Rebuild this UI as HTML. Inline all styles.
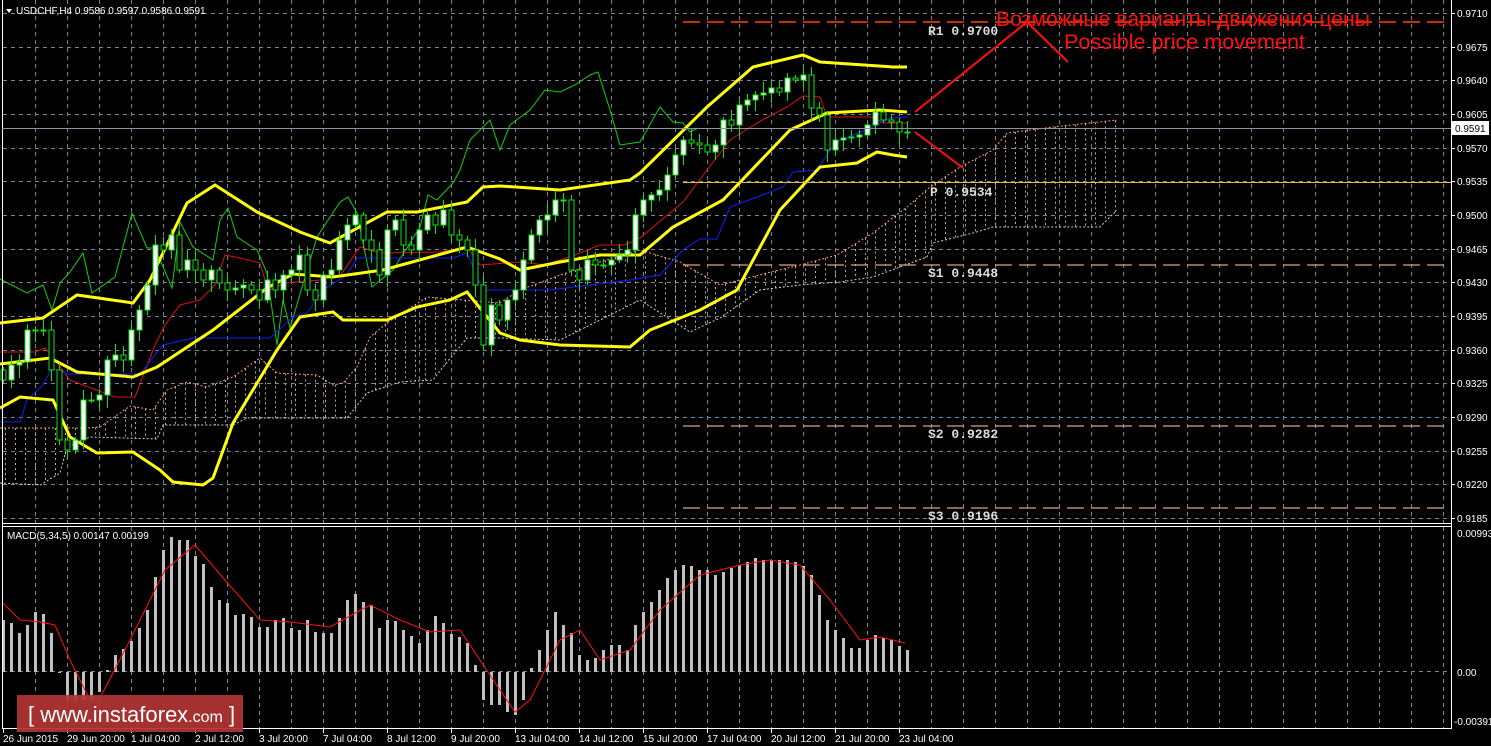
<!DOCTYPE html>
<html><head><meta charset="utf-8"><style>
html,body{margin:0;padding:0;background:#000;width:1491px;height:746px;overflow:hidden}
svg{display:block}
.ax{font-family:"Liberation Sans",sans-serif;font-size:10px;fill:#fff}
.pv{font-family:"Liberation Mono",monospace;font-size:13px;font-weight:bold;fill:#ddd}
</style></head><body>
<svg id="s" width="1491" height="746" xmlns="http://www.w3.org/2000/svg">
<rect width="1491" height="746" fill="#000"/>
<g id="grid" stroke="#7a8490" stroke-dasharray="4,4" stroke-width="1"></g>
<g id="cloud"></g>
<g id="lines" fill="none"></g>
<g id="candles"></g>
<g id="macd"></g>
<g stroke="#fff" stroke-width="1" fill="none">
<line x1="2.5" y1="0" x2="2.5" y2="728"/>
<line x1="1451.5" y1="0" x2="1451.5" y2="728"/>
<line x1="2" y1="523.5" x2="1452" y2="523.5"/>
<line x1="2" y1="526.5" x2="1452" y2="526.5"/>
<line x1="2" y1="728.5" x2="1452" y2="728.5"/>
</g>
<g id="axis"></g>
<line x1="2" y1="128.5" x2="1451" y2="128.5" stroke="#8a96a3"/>
<rect x="1452" y="121" width="37" height="14" fill="#fff"/>
<text x="1455" y="132" class="ax" style="fill:#000">0.9591</text>
<line x1="683" y1="22" x2="1447" y2="22" stroke="#ff4010" stroke-width="1.5" stroke-dasharray="17,7"/>
<line x1="683" y1="182.5" x2="1451" y2="182.5" stroke="#e8c040"/>
<line x1="683" y1="265" x2="1447" y2="265" stroke="#e0a080" stroke-width="1.2" stroke-dasharray="17,7"/>
<line x1="683" y1="426" x2="1447" y2="426" stroke="#e0a080" stroke-width="1.2" stroke-dasharray="17,7"/>
<line x1="683" y1="508" x2="1447" y2="508" stroke="#e0a080" stroke-width="1.2" stroke-dasharray="17,7"/>
<text x="928" y="35" class="pv">R1  0.9700</text>
<text x="930" y="196" class="pv">P  0.9534</text>
<text x="928" y="277" class="pv">S1  0.9448</text>
<text x="928" y="438" class="pv">S2  0.9282</text>
<text x="928" y="520" class="pv">S3  0.9196</text>
<polyline points="915,112 1027,22 1068,62" fill="none" stroke="#ff1010" stroke-width="2"/>
<line x1="915" y1="132" x2="963" y2="168" stroke="#ff1010" stroke-width="2"/>
<text x="996" y="26" font-family="Liberation Sans, sans-serif" font-size="21" fill="#ff1010" textLength="374" lengthAdjust="spacingAndGlyphs">Возможные варианты движения цены</text>
<text x="1064" y="49" font-family="Liberation Sans, sans-serif" font-size="21" fill="#ff1010" textLength="241" lengthAdjust="spacingAndGlyphs">Possible price movement</text>
<polygon points="6,9 12,9 9,13" fill="#fff"/>
<text x="16" y="14" class="ax">USDCHF,H4  0.9586 0.9597 0.9586 0.9591</text>
<text x="7" y="539" class="ax">MACD(5,34,5) 0.00147 0.00199</text>
<rect x="17" y="695" width="226" height="37" fill="#b03434" opacity="0.93"/>
<text x="28" y="722" font-family="Liberation Sans, sans-serif" font-size="22" fill="#fff">[ <tspan>www.instaforex</tspan><tspan font-size="16">.com</tspan> ]</text>
</svg>
<script>
(function(){
var NS="http://www.w3.org/2000/svg";
function el(p,t,a){var e=document.createElementNS(NS,t);for(var k in a)e.setAttribute(k,a[k]);p.appendChild(e);return e;}
var g=document.getElementById('grid');
for(var x=35;x<1450;x+=32){el(g,'line',{x1:x+.5,y1:0,x2:x+.5,y2:523});el(g,'line',{x1:x+.5,y1:527,x2:x+.5,y2:728});}
var ax=document.getElementById('axis');
for(var i=0;i<16;i++){var y=Math.round(13+i*33.67);el(g,'line',{x1:3,y1:y+.5,x2:1451,y2:y+.5});
 el(ax,'line',{x1:1451,y1:y+.5,x2:1455,y2:y+.5,stroke:'#fff'});
 var t=el(ax,'text',{x:1457,y:y+4,'class':'ax'});t.textContent=(0.9710-i*0.0035).toFixed(4);}
el(g,'line',{x1:3,y1:671.5,x2:1451,y2:671.5});
[['0.00993',533,1457],['0.00',672,1457],['-0.00391',721,1454]].forEach(function(a){var t=el(ax,'text',{x:a[2],y:a[1]+4,'class':'ax'});t.textContent=a[0];});
var dates=["26 Jun 2015","29 Jun 20:00","1 Jul 04:00","2 Jul 12:00","3 Jul 20:00","7 Jul 04:00","8 Jul 12:00","9 Jul 20:00","13 Jul 04:00","14 Jul 12:00","15 Jul 20:00","17 Jul 04:00","20 Jul 12:00","21 Jul 20:00","23 Jul 04:00"];
dates.forEach(function(d,i){var x=3+i*64;el(ax,'line',{x1:x+.5,y1:728,x2:x+.5,y2:733,stroke:'#fff'});var t=el(ax,'text',{x:x,y:742,'class':'ax'});t.textContent=d;});
var topA=[[0,428],[87,428],[100,427],[130,406],[153,410],[167,390],[187,382],[207,387],[233,377],[260,358],[277,373],[317,375],[333,385],[343,383],[357,367],[370,337],[387,323],[427,297],[463,300],[500,303],[520,290],[560,275],[600,262],[640,250],[680,262],[720,285],[767,273],[800,265],[837,255],[873,233],[907,207],[930,187],[960,167],[993,150],[1007,133],[1053,127],[1117,120]];
var botA=[[0,483],[40,485],[60,473],[67,447],[90,437],[157,439],[163,425],[233,425],[247,418],[347,418],[367,393],[400,382],[433,380],[443,367],[467,338],[500,338],[560,340],[640,300],[690,332],[720,318],[760,290],[800,285],[840,282],[873,277],[927,257],[933,243],[973,233],[993,227],[1100,227],[1117,210]];
function interp(arr,x){for(var i=1;i<arr.length;i++){if(x<=arr[i][0]){var a=arr[i-1],b=arr[i];return a[1]+(b[1]-a[1])*(x-a[0])/(b[0]-a[0]);}}return arr[arr.length-1][1];}
var cl=document.getElementById('cloud');
for(var x=5;x<=1117;x+=10){var a=interp(topA,x),b=interp(botA,x);el(cl,'line',{x1:x+.5,y1:Math.min(a,b),x2:x+.5,y2:Math.max(a,b),stroke:'#c9a890','stroke-dasharray':'2,3'});}
function pl(p,pts,c,w,d){var a={points:pts.map(function(q){return q.join(',')}).join(' '),stroke:c,'stroke-width':w,fill:'none'};if(d)a['stroke-dasharray']=d;el(p,'polyline',a);}
pl(cl,topA,'#f0a070',1,'2,2');pl(cl,botA,'#d0d0d0',1,'2,2');
var L=document.getElementById('lines');
pl(L,[[0,279],[27,293],[43,285],[52,310],[60,283],[70,272],[83,253],[92,293],[115,277],[132,213],[147,248],[155,248],[172,288],[180,222],[193,247],[213,260],[220,220],[228,208],[237,237],[257,250],[267,273],[277,345],[283,300],[290,328],[317,237],[340,202],[348,197],[357,213],[372,287],[393,270],[420,227],[428,195],[437,200],[453,183],[460,170],[470,140],[490,120],[500,150],[510,125],[530,110],[545,90],[560,92],[575,85],[590,75],[598,72],[610,110],[620,145],[640,142],[660,107],[673,122],[683,123],[690,132],[698,128]],'#10d010',1);
pl(L,[[0,352],[35,352],[45,348],[55,360],[70,380],[115,397],[135,397],[155,345],[165,325],[180,305],[200,300],[215,285],[225,255],[240,258],[260,263],[265,280],[270,290],[285,283],[320,280],[340,276],[360,247],[380,253],[440,252],[467,247],[480,265],[520,262],[545,265],[575,255],[600,245],[625,245],[640,238],[683,202],[707,170],[730,140],[757,123],[787,107],[803,96],[820,97],[827,117],[873,117],[883,123],[907,123]],'#e01010',1);
pl(L,[[0,422],[20,422],[27,400],[43,385],[52,368],[67,374],[140,374],[163,345],[193,338],[270,338],[293,317],[307,313],[323,290],[347,275],[357,258],[453,258],[467,253],[483,290],[550,290],[630,280],[660,275],[683,250],[700,239],[717,239],[730,207],[757,197],[783,187],[793,172],[817,170],[830,150],[840,140],[873,127],[890,118],[907,117]],'#1020ff',1);
pl(L,[[0,323],[43,318],[77,295],[133,303],[150,280],[187,203],[215,185],[257,212],[300,232],[330,243],[387,212],[417,212],[467,202],[483,187],[500,186],[560,190],[630,180],[640,173],[707,107],[753,67],[803,55],[820,62],[893,67],[907,67]],'#ffff10',3);
pl(L,[[0,364],[50,358],[77,372],[133,377],[157,367],[213,330],[267,288],[293,274],[333,277],[383,270],[467,247],[500,259],[520,270],[560,262],[600,255],[640,255],[673,227],[723,200],[790,130],[827,113],[880,110],[907,112]],'#ffff10',3);
pl(L,[[0,408],[20,397],[53,400],[70,437],[97,453],[133,452],[160,470],[173,482],[203,485],[213,478],[233,423],[277,350],[300,317],[333,312],[343,320],[387,320],[417,307],[450,300],[467,292],[500,333],[520,340],[560,345],[630,347],[650,330],[700,310],[737,290],[780,210],[820,167],[857,163],[877,152],[893,155],[907,157]],'#ffff10',3);
var C=[380,365,362,330,330,330,370,440,450,440,400,400,395,360,355,360,330,310,285,245,250,235,270,260,270,280,270,283,290,288,285,290,300,280,290,275,270,255,290,300,275,270,240,225,215,240,250,275,230,220,245,250,230,215,225,210,235,240,250,285,345,305,320,300,290,260,235,220,215,200,200,270,280,260,265,265,260,255,250,215,200,195,190,175,155,140,143,145,152,145,120,125,105,100,95,93,88,92,78,80,75,108,115,150,140,138,137,135,125,112,120,122,132,132];
var cg=document.getElementById('candles');var prev=370;
for(var i=0;i<C.length;i++){var x=3+i*8,o=prev,c=C[i];var h=Math.min(o,c)-3-((i*7)%9),l=Math.max(o,c)+3+((i*5)%11);
 el(cg,'line',{x1:x+.5,y1:h,x2:x+.5,y2:l,stroke:'#10e010'});
 var t=Math.min(o,c),bh=Math.max(1,Math.abs(o-c));
 el(cg,'rect',{x:x-2,y:t,width:5,height:bh,fill:c<=o?'#fff':'#000',stroke:'#10e010','stroke-width':1});prev=c;}
var M=[620,623,633,625,612,614,633,672,700,700,700,700,692,670,655,649,641,628,610,577,550,537,540,540,556,564,587,600,603,615,614,617,627,627,620,618,628,630,620,632,633,633,618,600,594,602,605,628,620,621,630,636,643,630,616,623,634,637,643,665,700,705,705,712,715,700,668,650,630,612,625,633,655,660,658,650,645,645,650,625,612,602,590,578,570,565,566,570,570,575,572,568,565,562,558,560,560,560,560,562,566,575,595,620,630,638,648,648,640,635,638,640,646,650];
var mg=document.getElementById('macd');
for(var i=0;i<M.length;i++){var x=3+i*8,y=M[i];el(mg,'rect',{x:x-1,y:Math.min(y,672),width:3,height:Math.max(1,Math.abs(y-672)),fill:'#c0c0c0'});}
pl(mg,[[3,603],[20,620],[40,622],[55,625],[70,660],[90,700],[100,698],[130,640],[165,570],[195,545],[225,580],[260,620],[290,622],[330,627],[370,605],[400,620],[430,632],[460,630],[500,690],[515,712],[530,700],[560,640],[580,630],[600,660],[630,650],[660,610],[700,575],[740,565],[770,560],[800,565],[830,600],[860,640],[880,637],[905,643]],'#ff1010',1);
})();
</script>
</body></html>
